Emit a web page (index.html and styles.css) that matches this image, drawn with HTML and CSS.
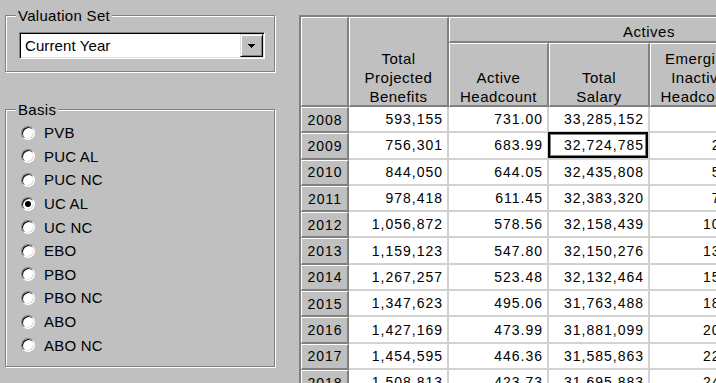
FILE: index.html
```html
<!DOCTYPE html>
<html>
<head>
<meta charset="utf-8">
<title>Valuation</title>
<link rel="stylesheet" href="styles.css">
</head>
<body>
<div class="app">
  <div class="side">
    <fieldset class="group group-val">
      <legend>Valuation Set</legend>
      <div class="combo">
        <span class="combo-text">Current Year</span>
        <span class="combo-btn"><svg width="7" height="4" viewBox="0 0 7 4" shape-rendering="crispEdges"><path d="M0 0h7v1h-1v1h-1v1h-1v1h-1v-1h-1v-1h-1v-1h-1z" fill="#000"/></svg></span>
      </div>
    </fieldset>
    <fieldset class="group group-basis">
      <legend>Basis</legend>
      <div class="opt"><span class="radio"></span><span>PVB</span></div>
      <div class="opt"><span class="radio"></span><span>PUC AL</span></div>
      <div class="opt"><span class="radio"></span><span>PUC NC</span></div>
      <div class="opt"><span class="radio on"></span><span>UC AL</span></div>
      <div class="opt"><span class="radio"></span><span>UC NC</span></div>
      <div class="opt"><span class="radio"></span><span>EBO</span></div>
      <div class="opt"><span class="radio"></span><span>PBO</span></div>
      <div class="opt"><span class="radio"></span><span>PBO NC</span></div>
      <div class="opt"><span class="radio"></span><span>ABO</span></div>
      <div class="opt"><span class="radio"></span><span>ABO NC</span></div>
    </fieldset>
  </div>

  <div class="sheet">
    <div class="hd corner"></div>
    <div class="hd span2"><span class="ht">Total<br>Projected<br>Benefits</span></div>
    <div class="hd group-hd">Actives</div>
    <div class="hd"><span class="ht">Active<br>Headcount</span></div>
    <div class="hd"><span class="ht">Total<br>Salary</span></div>
    <div class="hd"><span class="ht">Emerging<br>Inactive<br>Headcount</span></div>
    <div class="hd"><span class="ht">Inactive<br>Salary</span></div>

    <div class="yr">2008</div><div class="c">593,155</div><div class="c">731.00</div><div class="c">33,285,152</div><div class="c"></div><div class="c"></div>
    <div class="yr">2009</div><div class="c">756,301</div><div class="c">683.99</div><div class="c sel">32,724,785</div><div class="c">2.71</div><div class="c">41,560</div>
    <div class="yr">2010</div><div class="c">844,050</div><div class="c">644.05</div><div class="c">32,435,808</div><div class="c">5.36</div><div class="c">82,118</div>
    <div class="yr">2011</div><div class="c">978,418</div><div class="c">611.45</div><div class="c">32,383,320</div><div class="c">7.82</div><div class="c">120,447</div>
    <div class="yr">2012</div><div class="c">1,056,872</div><div class="c">578.56</div><div class="c">32,158,439</div><div class="c">10.14</div><div class="c">156,902</div>
    <div class="yr">2013</div><div class="c">1,159,123</div><div class="c">547.80</div><div class="c">32,150,276</div><div class="c">13.02</div><div class="c">198,311</div>
    <div class="yr">2014</div><div class="c">1,267,257</div><div class="c">523.48</div><div class="c">32,132,464</div><div class="c">15.33</div><div class="c">233,640</div>
    <div class="yr">2015</div><div class="c">1,347,623</div><div class="c">495.06</div><div class="c">31,763,488</div><div class="c">18.01</div><div class="c">271,915</div>
    <div class="yr">2016</div><div class="c">1,427,169</div><div class="c">473.99</div><div class="c">31,881,099</div><div class="c">20.47</div><div class="c">309,284</div>
    <div class="yr">2017</div><div class="c">1,454,595</div><div class="c">446.36</div><div class="c">31,585,863</div><div class="c">22.59</div><div class="c">340,776</div>
    <div class="yr">2018</div><div class="c">1,508,813</div><div class="c">423.73</div><div class="c">31,695,883</div><div class="c">24.66</div><div class="c">372,058</div>
  </div>
</div>
</body>
</html>
```

FILE: styles.css
```css
html, body {
  margin: 0;
  padding: 0;
  width: 716px;
  height: 383px;
  overflow: hidden;
}

body {
  font-family: "Liberation Sans", Arial, sans-serif;
  color: #000;
  background: repeating-conic-gradient(#c5c5c5 0 25%, #bbbbbb 0 50%) 0 0 / 2px 2px;
  background-attachment: fixed;
}

.app {
  display: flex;
  align-items: flex-start;
  padding-left: 5px;
}

/* ---------- left side ---------- */
.side {
  width: 270px;
  flex: none;
  display: flex;
  flex-direction: column;
}

.group {
  box-sizing: border-box;
  width: 270px;
  min-width: 0;
  margin: 0;
  border: 1px solid #808080;
  box-shadow: inset 1px 1px 0 #fff, 1px 1px 0 #fff;
}

.group legend {
  font-size: 15px;
  line-height: 17px;
  letter-spacing: 0.3px;
  padding: 0 2px;
  margin-left: -3px;
  background: repeating-conic-gradient(#c5c5c5 0 25%, #bbbbbb 0 50%) 0 0 / 2px 2px;
  background-attachment: fixed;
}

.group-val {
  margin-top: 7px;
  padding: 8px 8px 12px 13px;
}

.group-basis {
  margin-top: 29px;
  padding: 3px 8px 9px 13px;
}

.combo {
  box-sizing: border-box;
  width: 246px;
  height: 27px;
  display: flex;
  padding: 1px;
  background: #fff;
  border: 1px solid;
  border-color: #808080 #fff #fff #808080;
  box-shadow: inset 1px 1px 0 #000, inset -1px -1px 0 #dfdfdf;
}

.combo-text {
  flex: 1;
  display: flex;
  align-items: center;
  padding-left: 4px;
  font-size: 15px;
  letter-spacing: 0.1px;
}

.combo-btn {
  box-sizing: border-box;
  width: 23px;
  display: flex;
  align-items: center;
  justify-content: center;
  border: 1px solid;
  border-color: #dfdfdf #000 #000 #dfdfdf;
  box-shadow: inset 1px 1px 0 #fff, inset -1px -1px 0 #808080;
  background: #c0c0c0;
}

.opt {
  height: 23.6px;
  display: flex;
  align-items: center;
  gap: 9px;
  padding-left: 2px;
  font-size: 15px;
  line-height: 17px;
  letter-spacing: 0.2px;
}

.radio {
  box-sizing: border-box;
  width: 14px;
  height: 14px;
  flex: none;
  border-radius: 50%;
  background: #fff;
  border: 1px solid;
  border-color: #808080 #fff #fff #808080;
  box-shadow: inset 1px 1px 0 #000, inset -1px -1px 0 #dfdfdf;
  display: flex;
  align-items: center;
  justify-content: center;
}

.radio.on::after {
  content: "";
  width: 6px;
  height: 6px;
  border-radius: 50%;
  background: #000;
}

/* ---------- sheet ---------- */
.sheet {
  flex: none;
  margin: 15px 0 0 24px;
  display: grid;
  grid-template-columns: 48px 100px 100px 101px 99px 101px;
  grid-template-rows: 26px 64px repeat(11, 26.3px);
  border-top: 2px solid #808080;
  border-left: 2px solid #808080;
}

.hd, .yr {
  box-sizing: border-box;
  background: repeating-conic-gradient(#c5c5c5 0 25%, #bbbbbb 0 50%) 0 0 / 2px 2px;
  border-top: 1px solid #fff;
  border-left: 1px solid #fff;
  border-right: 2px solid #808080;
  border-bottom: 2px solid #808080;
}

.hd {
  display: flex;
  flex-direction: column;
  justify-content: flex-end;
  align-items: center;
  text-align: center;
  font-size: 15px;
  line-height: 19px;
  letter-spacing: 0.5px;
  overflow: hidden;
}

.hd .ht {
  margin-bottom: -1px;
}

.corner, .span2 {
  grid-row: 1 / 3;
}

.group-hd {
  grid-column: 3 / 7;
}

.yr {
  display: flex;
  align-items: center;
  justify-content: center;
  font-size: 14px;
  letter-spacing: 1px;
  padding-left: 1px;
}

.c {
  box-sizing: border-box;
  background: #fff;
  border-right: 2px solid #d2d2d2;
  border-bottom: 2px solid #d2d2d2;
  display: flex;
  align-items: center;
  justify-content: flex-end;
  padding-right: 4px;
  font-size: 14px;
  letter-spacing: 1px;
  white-space: nowrap;
}

.c.sel {
  position: relative;
}

.c.sel::after {
  content: "";
  position: absolute;
  top: -1px;
  left: -1px;
  right: 0;
  bottom: 0;
  border: 2px solid #000;
  box-shadow: inset 0 0 0 1px #808080;
}
```
